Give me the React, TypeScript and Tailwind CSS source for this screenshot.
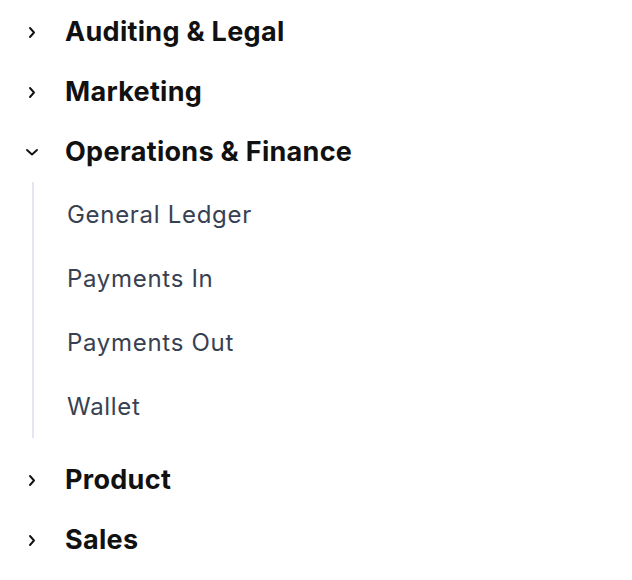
import React, { useState } from 'react';

interface Section {
  title: string;
  items: string[];
}

const sections: Section[] = [
  { title: 'Auditing & Legal', items: [] },
  { title: 'Marketing', items: [] },
  { title: 'Operations & Finance', items: ['General Ledger', 'Payments In', 'Payments Out', 'Wallet'] },
  { title: 'Product', items: [] },
  { title: 'Sales', items: [] },
];

const Chevron: React.FC<{ open: boolean }> = ({ open }) => (
  <svg className="h-4 w-4 shrink-0 text-[#111]" viewBox="0 0 16 16" fill="none" stroke="currentColor">
    {open ? (
      <path d="M3 6l5 4.5L13 6" strokeWidth={1.9} strokeLinecap="round" strokeLinejoin="round" />
    ) : (
      <path d="M6 4l4 4.5L6 13" strokeWidth={1.9} strokeLinecap="round" strokeLinejoin="round" />
    )}
  </svg>
);

const App: React.FC = () => {
  const [open, setOpen] = useState<Set<string>>(new Set(['Operations & Finance']));

  const toggle = (title: string) => {
    const next = new Set(open);
    if (next.has(title)) next.delete(title);
    else next.add(title);
    setOpen(next);
  };

  return (
    <div className="min-h-screen bg-white pt-[2px] pl-6" style={{ fontFamily: 'Inter, "Noto Sans", sans-serif' }}>
      {sections.map((section) => {
        const isOpen = open.has(section.title);
        return (
          <div key={section.title}>
            <button
              type="button"
              onClick={() => toggle(section.title)}
              className="flex h-[60px] items-center gap-[25px] text-left"
            >
              <Chevron open={isOpen} />
              <span className="text-[27px] font-bold tracking-[0.3px] text-[#111]">{section.title}</span>
            </button>
            {isOpen && section.items.length > 0 && (
              <ul className="mb-3 ml-2 border-l-2 border-[#e6e6f2] pl-[33px]">
                {section.items.map((item) => (
                  <li key={item} className="flex h-16 items-center pt-[1px] text-[24px] tracking-[0.7px] text-[#374151]">
                    {item}
                  </li>
                ))}
              </ul>
            )}
          </div>
        );
      })}
    </div>
  );
};

export default App;
